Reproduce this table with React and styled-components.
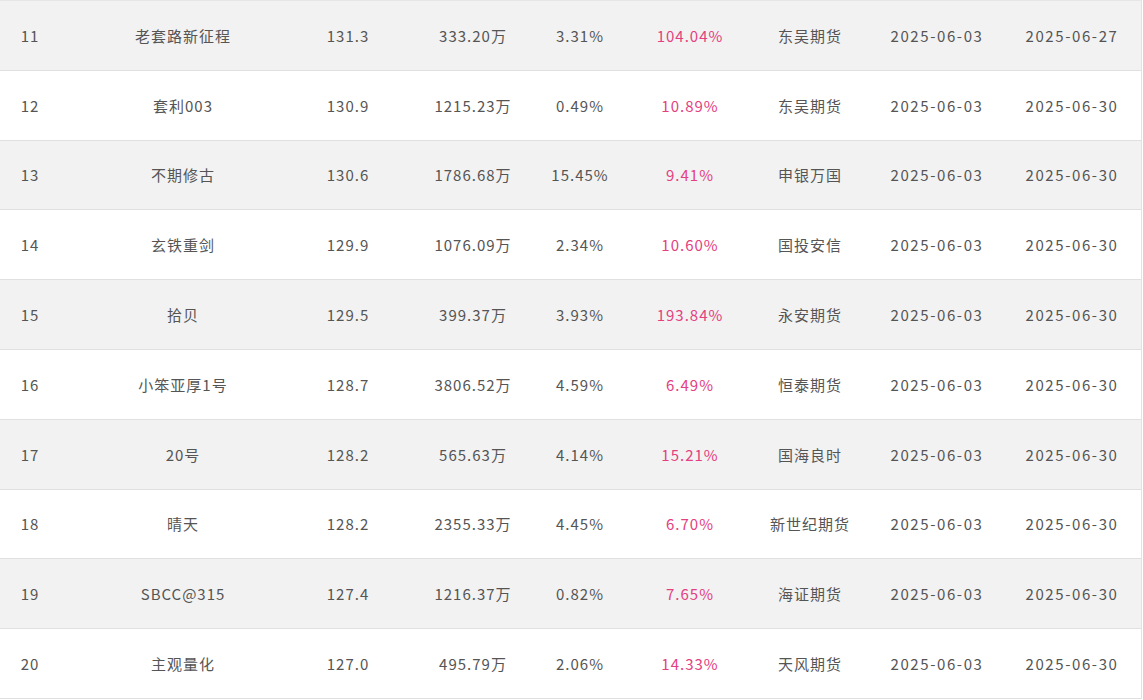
import React from "react";
import styled, { createGlobalStyle } from "styled-components";

const rows = [
  ["11", "老套路新征程", "131.3", "333.20万", "3.31%", "104.04%", "东吴期货", "2025-06-03", "2025-06-27"],
  ["12", "套利003", "130.9", "1215.23万", "0.49%", "10.89%", "东吴期货", "2025-06-03", "2025-06-30"],
  ["13", "不期修古", "130.6", "1786.68万", "15.45%", "9.41%", "申银万国", "2025-06-03", "2025-06-30"],
  ["14", "玄铁重剑", "129.9", "1076.09万", "2.34%", "10.60%", "国投安信", "2025-06-03", "2025-06-30"],
  ["15", "拾贝", "129.5", "399.37万", "3.93%", "193.84%", "永安期货", "2025-06-03", "2025-06-30"],
  ["16", "小笨亚厚1号", "128.7", "3806.52万", "4.59%", "6.49%", "恒泰期货", "2025-06-03", "2025-06-30"],
  ["17", "20号", "128.2", "565.63万", "4.14%", "15.21%", "国海良时", "2025-06-03", "2025-06-30"],
  ["18", "晴天", "128.2", "2355.33万", "4.45%", "6.70%", "新世纪期货", "2025-06-03", "2025-06-30"],
  ["19", "SBCC@315", "127.4", "1216.37万", "0.82%", "7.65%", "海证期货", "2025-06-03", "2025-06-30"],
  ["20", "主观量化", "127.0", "495.79万", "2.06%", "14.33%", "天风期货", "2025-06-03", "2025-06-30"],
];

const GlobalStyle = createGlobalStyle`
  html, body {
    margin: 0;
    padding: 0;
    background: #fff;
  }
`;

const Table = styled.div`
  width: 1141px;
  border-top: 1px solid #e6e6e6;
  border-right: 1px solid #e2e2e2;
  font-family: "Noto Sans CJK SC", "Noto Sans", sans-serif;
  font-size: 15px;
  letter-spacing: 1px;
  color: #555;
`;

const Row = styled.div`
  display: grid;
  grid-template-columns: 60px 246px 84px 166px 48px 172px 68px 186px 84px 1fr;
  height: 68.8px;
  border-bottom: 1px solid #e0e0e0;
  background: ${(p) => (p.$odd ? "#f2f2f2" : "#fff")};
`;

const Cell = styled.div`
  display: flex;
  align-items: center;
  justify-content: center;
  white-space: nowrap;
  letter-spacing: ${(p) => (p.$date ? "1.6px" : "1px")};
  color: ${(p) => (p.$pink ? "#e4407f" : "inherit")};
`;

export default function App() {
  return (
    <>
      <GlobalStyle />
      <Table>
        {rows.map((r, i) => (
          <Row key={r[0]} $odd={i % 2 === 0}>
            {r.map((v, j) => (
              <Cell key={j} $pink={j === 5} $date={j >= 7}>
                {v}
              </Cell>
            ))}
            <Cell />
          </Row>
        ))}
      </Table>
    </>
  );
}
